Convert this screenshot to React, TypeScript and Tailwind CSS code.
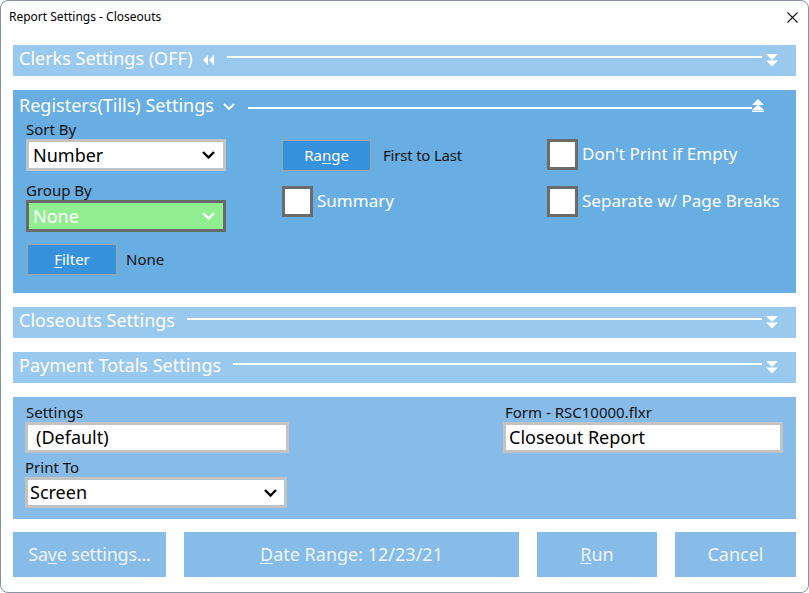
import React from "react";

function DoubleDown() {
  return (
    <svg width="12" height="13" viewBox="0 0 12 13" className="shrink-0">
      <path d="M0 0H12L6 6Z M0 6.5H12L6 12.5Z" fill="white" />
    </svg>
  );
}

function DoubleUp() {
  return (
    <svg width="12" height="13" viewBox="0 0 12 13" className="shrink-0">
      <path d="M6 0L12 6H0Z M6 5.5L12 11H0Z" fill="white" />
      <rect x="0" y="11.5" width="12" height="1.5" fill="white" />
    </svg>
  );
}

function Rewind() {
  return (
    <svg width="11" height="10" viewBox="0 0 11 10" className="shrink-0">
      <path d="M5 0V10L0 5Z M11 0V10L6 5Z" fill="white" />
    </svg>
  );
}

function SmallChevron() {
  return (
    <svg width="12" height="7" viewBox="0 0 12 7" className="shrink-0">
      <polyline points="1,1 6,6 11,1" fill="none" stroke="white" strokeWidth="2" />
    </svg>
  );
}

function SelectChevron({ color }: { color: string }) {
  return (
    <svg width="13" height="8" viewBox="0 0 13 8" className="shrink-0">
      <polyline points="1,1 6.5,6.5 12,1" fill="none" stroke={color} strokeWidth="2.4" />
    </svg>
  );
}

function CheckRow({ label }: { label: string }) {
  return (
    <div className="flex items-center h-[31px]">
      <div className="w-[31px] h-[31px] bg-white border-[3px] border-[#6b6b6b] shrink-0" />
      <span className="ml-[4px] mb-[2px] text-[17px] text-white leading-none whitespace-nowrap">{label}</span>
    </div>
  );
}

export default function App() {
  return (
    <div className="w-[809px] h-[593px] bg-white font-['Noto_Sans',sans-serif]">
      <div className="w-full h-full flex flex-col rounded-[8px] border border-[#8893a5] bg-white overflow-hidden">
        {/* Title bar */}
        <div className="h-[32px] flex items-center pl-[8px] pr-[10px] shrink-0">
          <span className="text-[12px] text-black leading-none">Report Settings - Closeouts</span>
          <div className="flex-1" />
          <svg width="11" height="11" viewBox="0 0 11 11">
            <path d="M0.5 0.5L10.5 10.5M10.5 0.5L0.5 10.5" stroke="#111" strokeWidth="1.1" />
          </svg>
        </div>

        <div className="flex flex-col px-[12px] pt-[12px]">
          {/* Clerks header */}
          <div className="h-[31px] bg-[#99c9ee] flex items-center pl-[6px] pr-[18px]">
            <span className="mb-[5px] text-[18px] text-white leading-none whitespace-nowrap">Clerks Settings (OFF)</span>
            <div className="ml-[10px] mb-[1px]">
              <Rewind />
            </div>
            <div className="ml-[13px] flex-1 h-[2px] bg-white self-start mt-[11px]" />
            <div className="ml-[4px]">
              <DoubleDown />
            </div>
          </div>

          {/* Registers panel */}
          <div className="mt-[14px] bg-[#68aee3] flex flex-col pb-[18px]">
            <div className="h-[31px] flex items-center pl-[6px] pr-[32px]">
              <span className="mb-[2px] text-[18px] text-white leading-none whitespace-nowrap">Registers(Tills) Settings</span>
              <div className="ml-[9px] mt-[2px]">
                <SmallChevron />
              </div>
              <div className="ml-[13px] flex-1 h-[2px] bg-white self-start mt-[17px]" />
              <DoubleUp />
            </div>

            <div className="flex pl-[13px]">
              {/* Column 1 */}
              <div className="w-[200px] flex flex-col">
                <div className="-mt-[1px] h-[18px] leading-[18px] text-[15px] text-[#111]">Sort By</div>
                <div className="mt-[1px] h-[32px] bg-white border-[3px] border-[#c3c3c3] flex items-center pl-[4px] pr-[8px]">
                  <span className="mb-[1px] text-[18px] text-black leading-none flex-1">Number</span>
                  <SelectChevron color="#000" />
                </div>
                <div className="mt-[10px] h-[18px] leading-[18px] text-[15px] text-[#111]">Group By</div>
                <div className="mt-[1px] h-[32px] bg-[#90ee90] border-[3px] border-[#696969] flex items-center pl-[4px] pr-[8px]">
                  <span className="mb-[1px] text-[18px] text-white leading-none flex-1">None</span>
                  <SelectChevron color="#fff" />
                </div>
                <div className="mt-[12px] flex items-center">
                  <div className="ml-[1px] w-[90px] h-[31px] bg-[#3792dd] border border-[#a3a3a3] flex items-center justify-center text-[15px] text-white">
                    <span>
                      <span className="underline underline-offset-2">F</span>ilter
                    </span>
                  </div>
                  <span className="ml-[9px] text-[15px] text-[#111]">None</span>
                </div>
              </div>

              {/* Column 2 */}
              <div className="ml-[56px] w-[265px] flex flex-col">
                <div className="mt-[19px] flex items-center h-[31px]">
                  <div className="w-[89px] h-[31px] bg-[#3792dd] border border-[#a3a3a3] flex items-center justify-center text-[15px] text-white">
                    <span>
                      Ra<span className="underline underline-offset-2">n</span>ge
                    </span>
                  </div>
                  <span className="ml-[12px] text-[15px] text-[#111] tracking-[-0.2px]">First to Last</span>
                </div>
                <div className="mt-[15px]">
                  <CheckRow label="Summary" />
                </div>
              </div>

              {/* Column 3 */}
              <div className="flex flex-col">
                <div className="mt-[18px]">
                  <CheckRow label="Don't Print if Empty" />
                </div>
                <div className="mt-[16px]">
                  <CheckRow label="Separate w/ Page Breaks" />
                </div>
              </div>
            </div>
          </div>

          {/* Closeouts header */}
          <div className="mt-[14px] h-[31px] bg-[#99c9ee] flex items-center pl-[6px] pr-[18px]">
            <span className="mb-[5px] text-[18px] text-white leading-none whitespace-nowrap">Closeouts Settings</span>
            <div className="ml-[12px] flex-1 h-[2px] bg-white self-start mt-[11px]" />
            <div className="ml-[4px]">
              <DoubleDown />
            </div>
          </div>

          {/* Payment Totals header */}
          <div className="mt-[14px] h-[31px] bg-[#99c9ee] flex items-center pl-[6px] pr-[18px]">
            <span className="mb-[5px] text-[18px] text-white leading-none whitespace-nowrap">Payment Totals Settings</span>
            <div className="ml-[12px] flex-1 h-[2px] bg-white self-start mt-[11px]" />
            <div className="ml-[4px]">
              <DoubleDown />
            </div>
          </div>

          {/* Bottom settings panel */}
          <div className="mt-[14px] bg-[#87bce9] flex justify-between pl-[12px] pr-[13px] pt-[6px] pb-[11px]">
            <div className="w-[264px] flex flex-col">
              <div className="h-[18px] leading-[18px] text-[15px] text-[#111] pl-[1px]">Settings</div>
              <div className="mt-[1px] h-[31px] bg-white border-[3px] border-[#c3c3c3] flex items-center pl-[8px]">
                <span className="mb-[1px] text-[18px] text-black leading-none">(Default)</span>
              </div>
              <div className="mt-[5px] h-[18px] leading-[18px] text-[15px] text-[#111]">Print To</div>
              <div className="mt-[1px] w-[262px] h-[31px] bg-white border-[3px] border-[#c3c3c3] flex items-center pl-[2px] pr-[7px]">
                <span className="mb-[1px] text-[18px] text-black leading-none flex-1">Screen</span>
                <SelectChevron color="#000" />
              </div>
            </div>
            <div className="w-[280px] flex flex-col">
              <div className="h-[18px] leading-[18px] text-[15px] text-[#111] pl-[2px]">Form - RSC10000.flxr</div>
              <div className="mt-[1px] h-[31px] bg-white border-[3px] border-[#c3c3c3] flex items-center pl-[3px]">
                <span className="mb-[1px] text-[18px] text-black leading-none">Closeout Report</span>
              </div>
            </div>
          </div>

          {/* Buttons */}
          <div className="mt-[13px] h-[45px] flex gap-[18px] text-[18px] text-[#eef5fc]">
            <div className="w-[153px] bg-[#87bce9] flex items-center justify-center">
              <span className="tracking-[-0.2px]">
                Sa<span className="underline underline-offset-2">v</span>e settings...
              </span>
            </div>
            <div className="w-[335px] bg-[#87bce9] flex items-center justify-center">
              <span>
                <span className="underline underline-offset-2">D</span>ate Range: 12/23/21
              </span>
            </div>
            <div className="w-[120px] bg-[#87bce9] flex items-center justify-center">
              <span>
                <span className="underline underline-offset-2">R</span>un
              </span>
            </div>
            <div className="w-[121px] bg-[#87bce9] flex items-center justify-center">
              <span>Cancel</span>
            </div>
          </div>
        </div>
      </div>
    </div>
  );
}
